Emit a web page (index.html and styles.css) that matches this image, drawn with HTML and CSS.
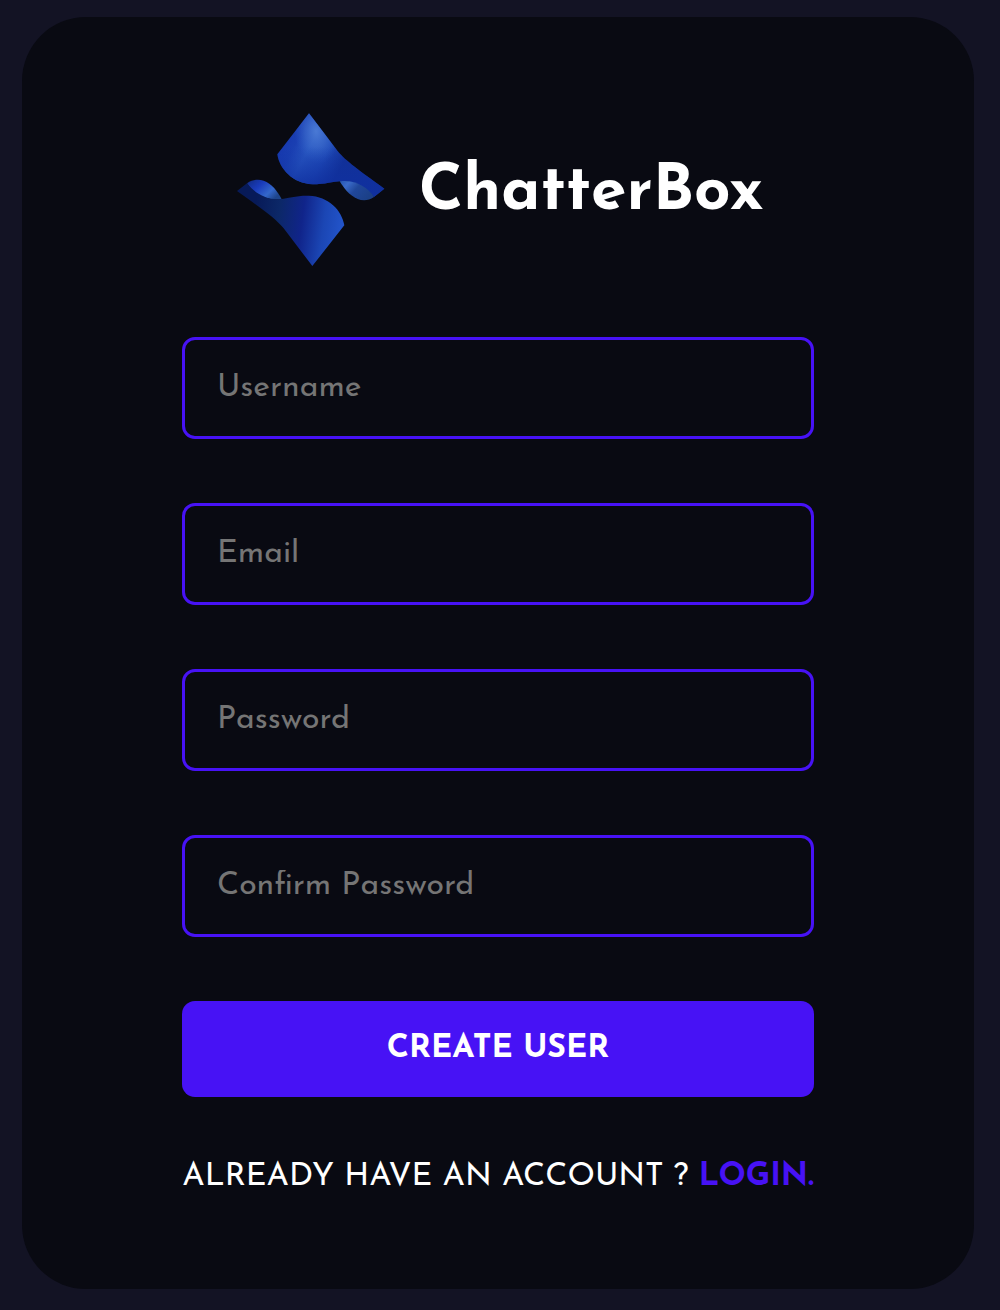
FILE: index.html
```html
<!DOCTYPE html>
<html lang="en">
<head>
<meta charset="utf-8">
<meta name="viewport" content="width=device-width, initial-scale=1">
<title>ChatterBox</title>
<link rel="stylesheet" href="styles.css">
</head>
<body>
<main class="page">
  <form class="card">
    <div class="brand">
      <svg class="logo" viewBox="38 38 444 462" aria-hidden="true">
        <defs>
          <linearGradient id="top" gradientUnits="userSpaceOnUse" x1="180" y1="110" x2="350" y2="200">
            <stop offset="0" stop-color="#1638ae"/><stop offset=".2" stop-color="#1a3fb2"/><stop offset=".42" stop-color="#2856c0"/><stop offset=".7" stop-color="#1f49b6"/><stop offset="1" stop-color="#112f94"/>
          </linearGradient>
          <radialGradient id="shine" gradientUnits="userSpaceOnUse" cx="0" cy="0" r="1" gradientTransform="translate(275 92) rotate(-8) scale(66 100)">
            <stop offset="0" stop-color="#5080d8" stop-opacity=".85"/><stop offset=".5" stop-color="#4474d2" stop-opacity=".5"/><stop offset="1" stop-color="#3568cf" stop-opacity="0"/>
          </radialGradient>
          <linearGradient id="shade" x1="0" y1="0" x2="0" y2="1">
            <stop offset=".4" stop-color="#1034a8" stop-opacity="0"/><stop offset=".85" stop-color="#1030a0" stop-opacity=".8"/>
          </linearGradient>
          <linearGradient id="bottom" gradientUnits="userSpaceOnUse" x1="90" y1="340" x2="350" y2="375">
            <stop offset="0" stop-color="#071a58"/><stop offset=".28" stop-color="#0c2868"/><stop offset=".55" stop-color="#10248a"/><stop offset=".8" stop-color="#1b46b4"/><stop offset="1" stop-color="#2253c8"/>
          </linearGradient>
          <linearGradient id="flapRight" x1="0" y1="0" x2="1" y2=".5">
            <stop offset="0" stop-color="#2454b0"/><stop offset=".25" stop-color="#3a6ac8"/><stop offset=".55" stop-color="#20479a"/><stop offset="1" stop-color="#1b4088"/>
          </linearGradient>
          <linearGradient id="flapLeft" x1="0" y1="0" x2="1" y2=".6">
            <stop offset="0" stop-color="#102a80"/><stop offset=".4" stop-color="#1a3cbc"/><stop offset=".75" stop-color="#3468cc"/><stop offset="1" stop-color="#1e458c"/>
          </linearGradient>
        </defs>
        <path fill="url(#top)" d="M254 39L340 152C365 183 405 210 480 265L449 290C425 262 390 238 346 243C330 244 300 252 265 252C205 250 165 205 159 162Z"/>
        <path fill="url(#shine)" d="M254 39L340 152L330 220L190 220L159 162Z"/>
        <path fill="url(#shade)" d="M254 39L340 152C365 183 405 210 480 265L449 290C425 262 390 238 346 243C330 244 300 252 265 252C205 250 165 205 159 162Z"/>
        <path fill="url(#flapRight)" d="M346 243C390 236 430 260 449 290C432 302 415 302 400 296C372 284 358 262 346 243Z"/>
        <path fill="url(#flapLeft)" d="M172 297C160 272 142 250 118 241C102 236 86 237 68 249C90 283 130 302 172 297Z"/>
        <path fill="url(#bottom)" d="M264 497L178 384C153 353 113 326 38 272L68 249C92 279 128 301 172 296C188 294 218 285 253 286C313 288 353 330 360 375Z"/>
      </svg>
      <h1 class="name">ChatterBox</h1>
    </div>
    <input class="field" type="text" placeholder="Username" aria-label="Username">
    <input class="field" type="email" placeholder="Email" aria-label="Email">
    <input class="field" type="password" placeholder="Password" aria-label="Password">
    <input class="field" type="password" placeholder="Confirm Password" aria-label="Confirm Password">
    <button class="submit" type="submit">CREATE USER</button>
    <p class="prompt">ALREADY HAVE AN ACCOUNT ? <a class="login" href="#login">LOGIN.</a></p>
  </form>
</main>
</body>
</html>
```
FILE: styles.css
```css
* {
  box-sizing: border-box;
}

body {
  margin: 0;
  background: #131324;
  color: #fff;
  font-family: "Josefin Sans", Lato, sans-serif;
}

.page {
  min-height: 100vh;
  padding: 17px 26px 21px 22px;
}

.card {
  display: flex;
  flex-direction: column;
  gap: 64px;
  padding: 96px 16.8% 96px;
  border-radius: 64px;
  background: #090a12;
}

.brand {
  display: flex;
  align-items: center;
  justify-content: center;
  gap: 34px;
  height: 160px;
  padding-left: 4px;
}

.logo {
  flex: none;
  width: 148px;
  height: 154px;
  margin-bottom: 6px;
}

.name {
  margin: 0;
  font-size: 64px;
  font-weight: 700;
  line-height: 80px;
}

.field {
  width: 100%;
  height: 102px;
  padding: 0 32px;
  border: 3px solid #4712f5;
  border-radius: 13px;
  background: transparent;
  color: #fff;
  font: 400 32px/40px "Josefin Sans", Lato, sans-serif;
}

.field::placeholder {
  color: #757575;
  opacity: 1;
}

.submit {
  height: 96px;
  padding: 0 32px;
  border: 0;
  border-radius: 13px;
  background: #4712f5;
  color: #fff;
  font: 700 32px/40px "Josefin Sans", Lato, sans-serif;
}

.prompt {
  margin: 0;
  font-size: 32px;
  line-height: 32px;
  text-align: center;
  white-space: nowrap;
}

.login {
  color: #4712f5;
  font-weight: 700;
  text-decoration: none;
}
```
